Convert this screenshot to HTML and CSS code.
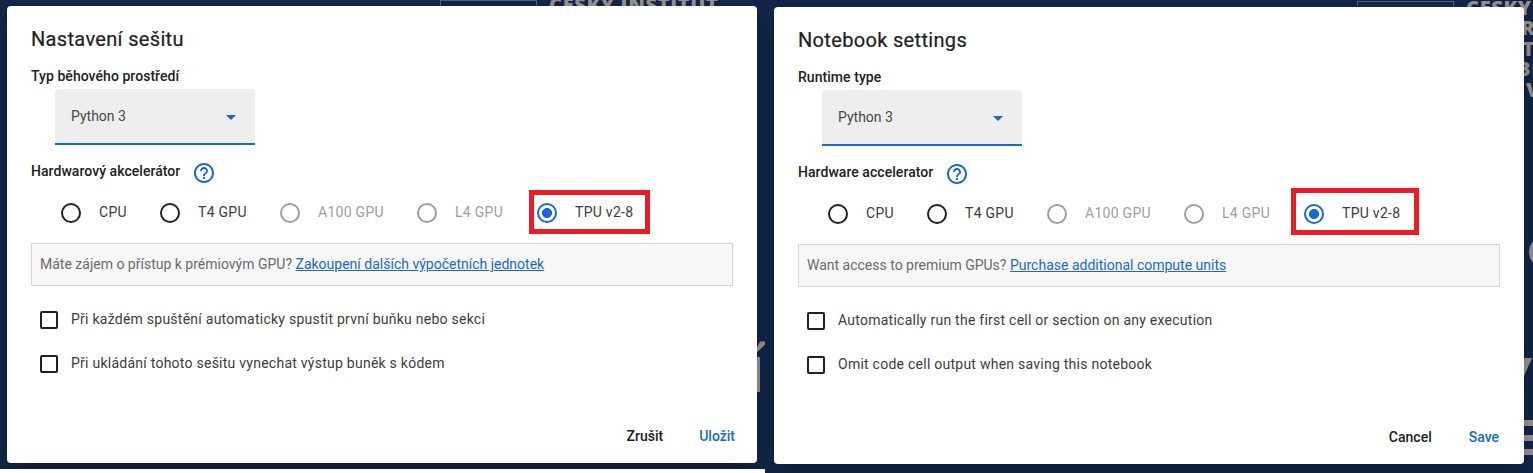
FILE: index.html
```
<!DOCTYPE html>
<html lang="cs">
<head>
<meta charset="utf-8">
<title>Nastavení sešitu / Notebook settings</title>
<link rel="stylesheet" href="styles.css">
</head>
<body>
<main class="panes">
  <section class="pane pane-cs">
    <div class="logo-frame"></div>
    <span class="brand brand-cs">ČESKÝ INSTITUT</span>
    <span class="slide-letter">í</span>
    <div class="dialog">
      <h1 class="title">Nastavení sešitu</h1>
      <h2 class="label">Typ běhového prostředí</h2>
      <div class="select"><span>Python 3</span><svg class="arrow" width="10" height="5" viewBox="0 0 10 5"><path d="M0 0h10L5 5z"/></svg></div>
      <div class="label-row"><h2 class="label">Hardwarový akcelerátor</h2><svg class="help" viewBox="0 0 24 24"><path d="M11 18h2v-2h-2v2zm1-16C6.480 2 2 6.480 2 12s4.480 10 10 10 10-4.480 10-10S17.520 2 12 2zm0 18c-4.410 0-8-3.590-8-8s3.590-8 8-8 8 3.590 8 8-3.590 8-8 8zm0-14c-2.210 0-4 1.790-4 4h2c0-1.100.9-2 2-2s2 .9 2 2c0 2-3 1.750-3 5h2c0-2.250 3-2.500 3-5 0-2.210-1.790-4-4-4z"/></svg></div>
      <div class="radios">
        <div class="radio"><i class="ring"></i>CPU</div>
        <div class="radio"><i class="ring"></i>T4 GPU</div>
        <div class="radio disabled"><i class="ring"></i>A100 GPU</div>
        <div class="radio disabled"><i class="ring"></i>L4 GPU</div>
        <div class="radio checked"><i class="ring"></i>TPU v2-8<b class="highlight"></b></div>
      </div>
      <p class="notice">Máte zájem o přístup k prémiovým GPU? <a class="link">Zakoupení dalších výpočetních jednotek</a></p>
      <div class="check"><i class="box"></i><span>Při každém spuštění automaticky spustit první buňku nebo sekci</span></div>
      <div class="check"><i class="box"></i><span>Při ukládání tohoto sešitu vynechat výstup buněk s kódem</span></div>
      <div class="actions"><span>Zrušit</span><span class="primary">Uložit</span></div>
    </div>
  </section>
  <section class="pane pane-en" lang="en">
    <div class="logo-frame"></div>
    <span class="brand brand-en">ČESKÝ</span>
    <span class="brand edge-r">R</span>
    <span class="brand edge-ot">OT</span>
    <span class="brand edge-be">BE</span>
    <span class="brand edge-v">V</span>
    <span class="moon"></span>
    <svg class="slash" width="10" height="18" viewBox="0 0 10 18"><path d="M0 0h8L0 18z"/></svg>
    <div class="stripes"><i></i><i></i><i></i></div>
    <div class="dialog">
      <h1 class="title">Notebook settings</h1>
      <h2 class="label">Runtime type</h2>
      <div class="select"><span>Python 3</span><svg class="arrow" width="10" height="5" viewBox="0 0 10 5"><path d="M0 0h10L5 5z"/></svg></div>
      <div class="label-row"><h2 class="label">Hardware accelerator</h2><svg class="help" viewBox="0 0 24 24"><path d="M11 18h2v-2h-2v2zm1-16C6.480 2 2 6.480 2 12s4.480 10 10 10 10-4.480 10-10S17.520 2 12 2zm0 18c-4.410 0-8-3.590-8-8s3.590-8 8-8 8 3.590 8 8-3.590 8-8 8zm0-14c-2.210 0-4 1.790-4 4h2c0-1.100.9-2 2-2s2 .9 2 2c0 2-3 1.750-3 5h2c0-2.250 3-2.500 3-5 0-2.210-1.790-4-4-4z"/></svg></div>
      <div class="radios">
        <div class="radio"><i class="ring"></i>CPU</div>
        <div class="radio"><i class="ring"></i>T4 GPU</div>
        <div class="radio disabled"><i class="ring"></i>A100 GPU</div>
        <div class="radio disabled"><i class="ring"></i>L4 GPU</div>
        <div class="radio checked"><i class="ring"></i>TPU v2-8<b class="highlight"></b></div>
      </div>
      <p class="notice">Want access to premium GPUs? <a class="link">Purchase additional compute units</a></p>
      <div class="check"><i class="box"></i><span>Automatically run the first cell or section on any execution</span></div>
      <div class="check"><i class="box"></i><span>Omit code cell output when saving this notebook</span></div>
      <div class="actions"><span>Cancel</span><span class="primary">Save</span></div>
    </div>
  </section>
</main>
</body>
</html>
```
FILE: styles.css
```
* { box-sizing: border-box; }
body { margin: 0; background: #fff; font-family: Roboto, sans-serif; color: #212121; }
.panes { display: flex; align-items: flex-start; width: 1533px; height: 473px; overflow: hidden; }
.pane { position: relative; overflow: hidden; background: #132648; }
.pane-cs { width: 765px; height: 469px; padding: 6px 8px 6px 7px; }
.pane-en { width: 768px; height: 473px; padding: 7px 9px 9px; }

.dialog {
  position: relative;
  width: 750px;
  height: 457px;
  padding: 20px 24px 0;
  background: #fff;
  border-radius: 4px;
  box-shadow: 0 11px 15px -7px rgba(0,0,0,.2), 0 9px 24px 2px rgba(0,0,0,.14);
}
.title { margin: 0 0 14px; font-size: 20px; font-weight: 400; line-height: 26px; letter-spacing: .33px; -webkit-text-stroke: .2px #212121; }
.label { margin: 0; font-size: 14px; font-weight: 500; line-height: 20px; letter-spacing: .05px; }
.select {
  display: flex; align-items: center; justify-content: space-between;
  width: 200px; height: 56px; margin: 3px 0 16px 24px; padding: 0 19px 0 16px;
  background: #eee; border-bottom: 2px solid #1967d2; border-radius: 4px 4px 0 0;
  color: #484848; font-size: 14px;
}
.arrow { fill: #1967d2; margin-top: 2px; }
.label-row { display: flex; height: 20px; }
.help { width: 24px; height: 24px; margin-left: 12px; fill: #1967d2; }
.radios { display: grid; grid-template-columns: 99px 120px 137px 120px 130px; margin: 22px 0 20px 30px; height: 20px; }
.radio { position: relative; display: flex; gap: 18px; font-size: 14px; line-height: 19px; letter-spacing: .28px; color: #3c3c3c; }
.ring { flex: none; width: 20px; height: 20px; border: 2px solid #212121; border-radius: 50%; }
.disabled { color: #9e9e9e; }
.disabled .ring { border-color: #9e9e9e; }
.checked .ring { border-color: #1967d2; background: radial-gradient(circle, #1967d2 4.700px, #fff 5.300px); }
.highlight { position: absolute; border: 5px solid #ed1c24; }
.pane-cs .highlight { left: -8px; top: -13px; width: 121px; height: 44px; }
.pane-en .highlight { left: -13px; top: -16px; width: 128px; height: 47px; }
.notice { width: 702px; height: 43px; margin: 0 0 25px; padding: 0 8px; background: #f7f7f7; border: 1px solid #d5d5d5; color: #6b6b6b; font-size: 14px; line-height: 41px; }
.link { color: #1967d2; text-decoration: underline; }
.check { display: flex; gap: 13px; height: 18px; margin: 0 0 26px 9px; font-size: 14px; line-height: 17px; letter-spacing: .25px; color: #3c3c3c; white-space: nowrap; }
.box { flex: none; width: 18px; height: 18px; border: 2px solid #212121; border-radius: 2px; }
.actions { display: flex; justify-content: flex-end; gap: 36px; margin: 53px -2px 0 0; font-size: 14px; font-weight: 500; line-height: 20px; }
.pane-en .actions { gap: 37px; margin-right: 1px; }
.primary { color: #1967d2; }

.logo-frame { position: absolute; left: 440px; top: 0; width: 97px; height: 40px; border: 1px solid #51617c; }
.pane-en .logo-frame { left: 592px; top: 1px; width: 97px; }
.brand { position: absolute; font: 800 20px/18px "Open Sans", sans-serif; letter-spacing: .650px; color: #96928f; white-space: nowrap; }
.brand-cs { left: 549px; top: -4px; }
.brand-en { left: 701px; top: -1px; }
.edge-r { left: 756px; top: 19px; }
.edge-ot { left: 741px; top: 40px; }
.edge-be { left: 752px; top: 60px; }
.edge-v { left: 761px; top: 81px; }
.slide-letter { position: absolute; left: 749px; top: 336px; color: #96928f; font: 400 66px/60px "Open Sans", sans-serif; }
.moon { position: absolute; left: 764px; top: 239px; width: 20px; height: 26px; border-radius: 50%; background: #96928f; }
.slash { position: absolute; left: 759px; top: 358px; fill: #96928f; }
.stripes { position: absolute; left: 755px; top: 420px; width: 13px; height: 35px; display: flex; flex-direction: column; justify-content: space-between; }
.stripes i { height: 6px; background: #96928f; }
```
